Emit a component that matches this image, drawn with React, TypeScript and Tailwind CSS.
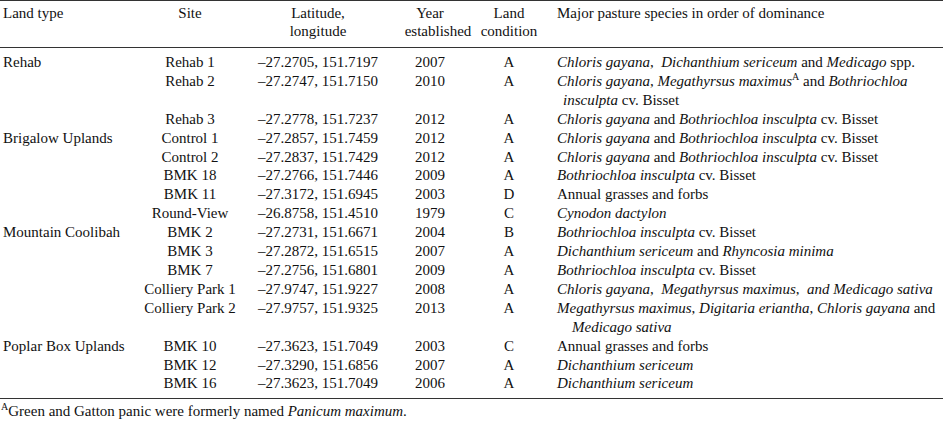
import React from "react";

type Row = {
  land?: string;
  site: string;
  ll: string;
  year: string;
  cond: string;
  sp: React.ReactNode;
  sp2?: React.ReactNode;
  indent?: string;
};

const I = ({ children }: { children: React.ReactNode }) => <i>{children}</i>;

const rows: Row[] = [
  { land: "Rehab", site: "Rehab 1", ll: "–27.2705, 151.7197", year: "2007", cond: "A", sp: <><I>Chloris gayana</I>,{"\u00a0 "}<I>Dichanthium sericeum</I> and <I>Medicago</I> spp.</> },
  { site: "Rehab 2", ll: "–27.2747, 151.7150", year: "2010", cond: "A", sp: <><I>Chloris gayana</I>, <I>Megathyrsus maximus</I><sup className="text-[10px] relative -top-[6px]">A</sup> and <I>Bothriochloa</I></>, sp2: <><I>insculpta</I> cv. Bisset</>, indent: "pl-[6px]" },
  { site: "Rehab 3", ll: "–27.2778, 151.7237", year: "2012", cond: "A", sp: <><I>Chloris gayana</I> and <I>Bothriochloa insculpta</I> cv. Bisset</> },
  { land: "Brigalow Uplands", site: "Control 1", ll: "–27.2857, 151.7459", year: "2012", cond: "A", sp: <><I>Chloris gayana</I> and <I>Bothriochloa insculpta</I> cv. Bisset</> },
  { site: "Control 2", ll: "–27.2837, 151.7429", year: "2012", cond: "A", sp: <><I>Chloris gayana</I> and <I>Bothriochloa insculpta</I> cv. Bisset</> },
  { site: "BMK 18", ll: "–27.2766, 151.7446", year: "2009", cond: "A", sp: <><I>Bothriochloa insculpta</I> cv. Bisset</> },
  { site: "BMK 11", ll: "–27.3172, 151.6945", year: "2003", cond: "D", sp: <>Annual grasses and forbs</> },
  { site: "Round-View", ll: "–26.8758, 151.4510", year: "1979", cond: "C", sp: <I>Cynodon dactylon</I> },
  { land: "Mountain Coolibah", site: "BMK 2", ll: "–27.2731, 151.6671", year: "2004", cond: "B", sp: <><I>Bothriochloa insculpta</I> cv. Bisset</> },
  { site: "BMK 3", ll: "–27.2872, 151.6515", year: "2007", cond: "A", sp: <><I>Dichanthium sericeum</I> and <I>Rhyncosia minima</I></> },
  { site: "BMK 7", ll: "–27.2756, 151.6801", year: "2009", cond: "A", sp: <><I>Bothriochloa insculpta</I> cv. Bisset</> },
  { site: "Colliery Park 1", ll: "–27.9747, 151.9227", year: "2008", cond: "A", sp: <><I>Chloris gayana</I>,{"\u00a0 "}<I>Megathyrsus maximus</I>,{"\u00a0 "}<I>and Medicago sativa</I></> },
  { site: "Colliery Park 2", ll: "–27.9757, 151.9325", year: "2013", cond: "A", sp: <><I>Megathyrsus maximus</I>, <I>Digitaria eriantha</I>, <I>Chloris gayana</I> and</>, sp2: <I>Medicago sativa</I>, indent: "pl-[15px]" },
  { land: "Poplar Box Uplands", site: "BMK 10", ll: "–27.3623, 151.7049", year: "2003", cond: "C", sp: <>Annual grasses and forbs</> },
  { site: "BMK 12", ll: "–27.3290, 151.6856", year: "2007", cond: "A", sp: <I>Dichanthium sericeum</I> },
  { site: "BMK 16", ll: "–27.3623, 151.7049", year: "2006", cond: "A", sp: <I>Dichanthium sericeum</I> },
];

export default function App() {
  return (
    <div className="w-[943px] h-[421px] bg-white text-[#111] overflow-hidden font-['Liberation_Serif']">
      <table className="w-[943px] table-fixed border-collapse text-[15px]">
        <colgroup>
          <col className="w-[140px]" />
          <col className="w-[100px]" />
          <col className="w-[156px]" />
          <col className="w-[68px]" />
          <col className="w-[90px]" />
          <col />
        </colgroup>
        <thead>
          <tr className="border-t border-b border-[#333] align-top leading-[18px]">
            <th className="font-normal text-left pl-[3px] pt-[3px] pb-[7px]">Land type</th>
            <th className="font-normal text-center pt-[3px] pb-[7px]">Site</th>
            <th className="font-normal text-center pt-[3px] pb-[7px]">Latitude,<br />longitude</th>
            <th className="font-normal text-center pt-[3px] pb-[7px]">Year<br /><span className="relative left-[8px]">established</span></th>
            <th className="font-normal text-center pt-[3px] pb-[7px]">Land<br />condition</th>
            <th className="font-normal text-left pl-[3px] pt-[3px] pb-[7px]">Major pasture species in order of dominance</th>
          </tr>
        </thead>
        <tbody className="leading-[18.9px]">
          {rows.map((r, i) => {
            const first = i === 0;
            const last = i === rows.length - 1;
            const pad = first ? "pt-[5px]" : last ? "pb-[5px]" : "";
            return (
              <tr key={i} className={"align-top " + (last ? "border-b border-[#333]" : "")}>
                <td className={"pl-[3px] whitespace-nowrap " + pad}>{r.land ?? ""}</td>
                <td className={"text-center whitespace-nowrap " + pad}>{r.site}</td>
                <td className={"text-center whitespace-nowrap " + pad}>{r.ll}</td>
                <td className={"text-center " + pad}>{r.year}</td>
                <td className={"text-center " + pad}>{r.cond}</td>
                <td className={"pl-[3px] whitespace-nowrap " + pad}>
                  <div>{r.sp}</div>
                  {r.sp2 && <div className={r.indent}>{r.sp2}</div>}
                </td>
              </tr>
            );
          })}
        </tbody>
      </table>
      <div className="text-[15px] leading-[18px] pt-[3px] pl-[1px]">
        <sup className="text-[10px] relative -top-[6px]">A</sup>Green and Gatton panic were formerly named <i>Panicum maximum</i>.
      </div>
    </div>
  );
}
